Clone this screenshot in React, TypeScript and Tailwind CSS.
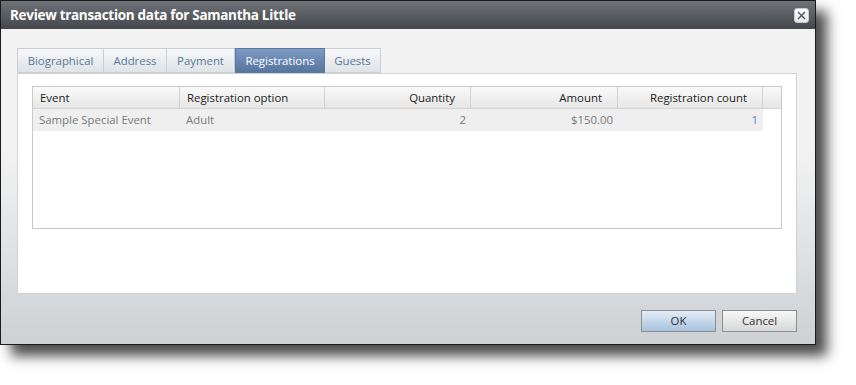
const tabs = [
  { label: 'Biographical', width: 'w-[87px]' },
  { label: 'Address', width: 'w-[63px]' },
  { label: 'Payment', width: 'w-[68px]' },
  { label: 'Registrations', width: 'w-[90px]' },
  { label: 'Guests', width: 'w-[56px]' },
];

const columns = [
  { label: 'Event', width: 'w-[147px]', align: 'left' },
  { label: 'Registration option', width: 'w-[145px]', align: 'left' },
  { label: 'Quantity', width: 'w-[146px]', align: 'right' },
  { label: 'Amount', width: 'w-[147px]', align: 'right' },
  { label: 'Registration count', width: 'w-[145px]', align: 'right' },
];

const row = ['Sample Special Event', 'Adult', '2', '$150.00', '1'];

export default function App() {
  return (
    <div className="h-[385px] w-[856px] bg-white font-['Open_Sans',sans-serif] text-[11.4px]">
      <div className="flex h-[345px] w-[816px] flex-col border border-[#1b1c1e] shadow-[11px_11px_12px_rgba(0,0,0,0.7)]">
        {/* Title bar */}
        <div className="flex h-[28px] shrink-0 items-center justify-between bg-gradient-to-b from-[#6f7277] to-[#44474c] pl-[9px] pr-[6px]">
          <span className="text-[13.5px] font-bold tracking-[-0.3px] text-white">
            Review transaction data for Samantha Little
          </span>
          <button className="flex h-[15px] w-[15px] items-center justify-center rounded-[3px] border border-[#c9cbcd] bg-gradient-to-b from-white to-[#e4e6e8]">
            <svg width="9" height="9" viewBox="0 0 9 9">
              <path d="M1 1L8 8M8 1L1 8" stroke="#4a4d52" strokeWidth="1.3" />
            </svg>
          </button>
        </div>

        {/* Body */}
        <div className="flex flex-1 flex-col bg-gradient-to-b from-[#f2f2f2] from-40% to-[#cdd1d4] pl-[16px] pr-[18px] pt-[19px]">
          {/* Tabs */}
          <div className="flex h-[25px]">
            {tabs.map((tab) => {
              const active = tab.label === 'Registrations';
              return (
                <div
                  key={tab.label}
                  className={
                    active
                      ? `${tab.width} flex items-center justify-center border border-[#5a77a1] bg-gradient-to-b from-[#7d9bc3] to-[#56759f] text-white`
                      : `${tab.width} flex items-center justify-center border border-l-0 border-[#c8ced3] bg-gradient-to-b from-[#f7f8f9] to-[#dfe3e6] text-[#56789a] first:border-l`
                  }
                >
                  {tab.label}
                </div>
              );
            })}
          </div>

          {/* Tab panel */}
          <div className="h-[221px] border border-[#cfd3d6] bg-white px-[14px] pt-[12px]">
            <div className="h-[143px] border border-[#c9c9c9]">
              <div className="flex h-[22px] border-b border-[#d4d4d4] bg-gradient-to-b from-[#fafafa] to-[#e6e6e6] text-[#222]">
                {columns.map((c) => (
                  <div
                    key={c.label}
                    className={`${c.width} flex items-center border-r border-[#d2d2d2] ${
                      c.align === 'right' ? 'justify-end pr-[15px]' : 'pl-[7px]'
                    }`}
                  >
                    {c.label}
                  </div>
                ))}
                <div className="flex-1" />
              </div>
              <div className="flex h-[22px]">
                {row.map((v, i) => (
                  <div
                    key={i}
                    className={`${columns[i].width} flex items-center bg-[#efefef] ${
                      columns[i].align === 'right' ? 'justify-end pr-[5px]' : 'pl-[6px]'
                    } ${i === 4 ? 'text-[#5f87b3]' : 'text-[#7a7a7a]'}`}
                  >
                    {v}
                  </div>
                ))}
              </div>
            </div>
          </div>

          {/* Footer */}
          <div className="flex justify-end gap-[6px] pt-[16px]">
            <button className="h-[22px] w-[75px] border border-[#8c8f92] bg-gradient-to-b from-[#e3edf6] to-[#a7c3de] text-[#333]">
              OK
            </button>
            <button className="h-[22px] w-[75px] border border-[#8c8f92] bg-gradient-to-b from-[#f7f7f7] to-[#d7d8d9] text-[#333]">
              Cancel
            </button>
          </div>
        </div>
      </div>
    </div>
  );
}
